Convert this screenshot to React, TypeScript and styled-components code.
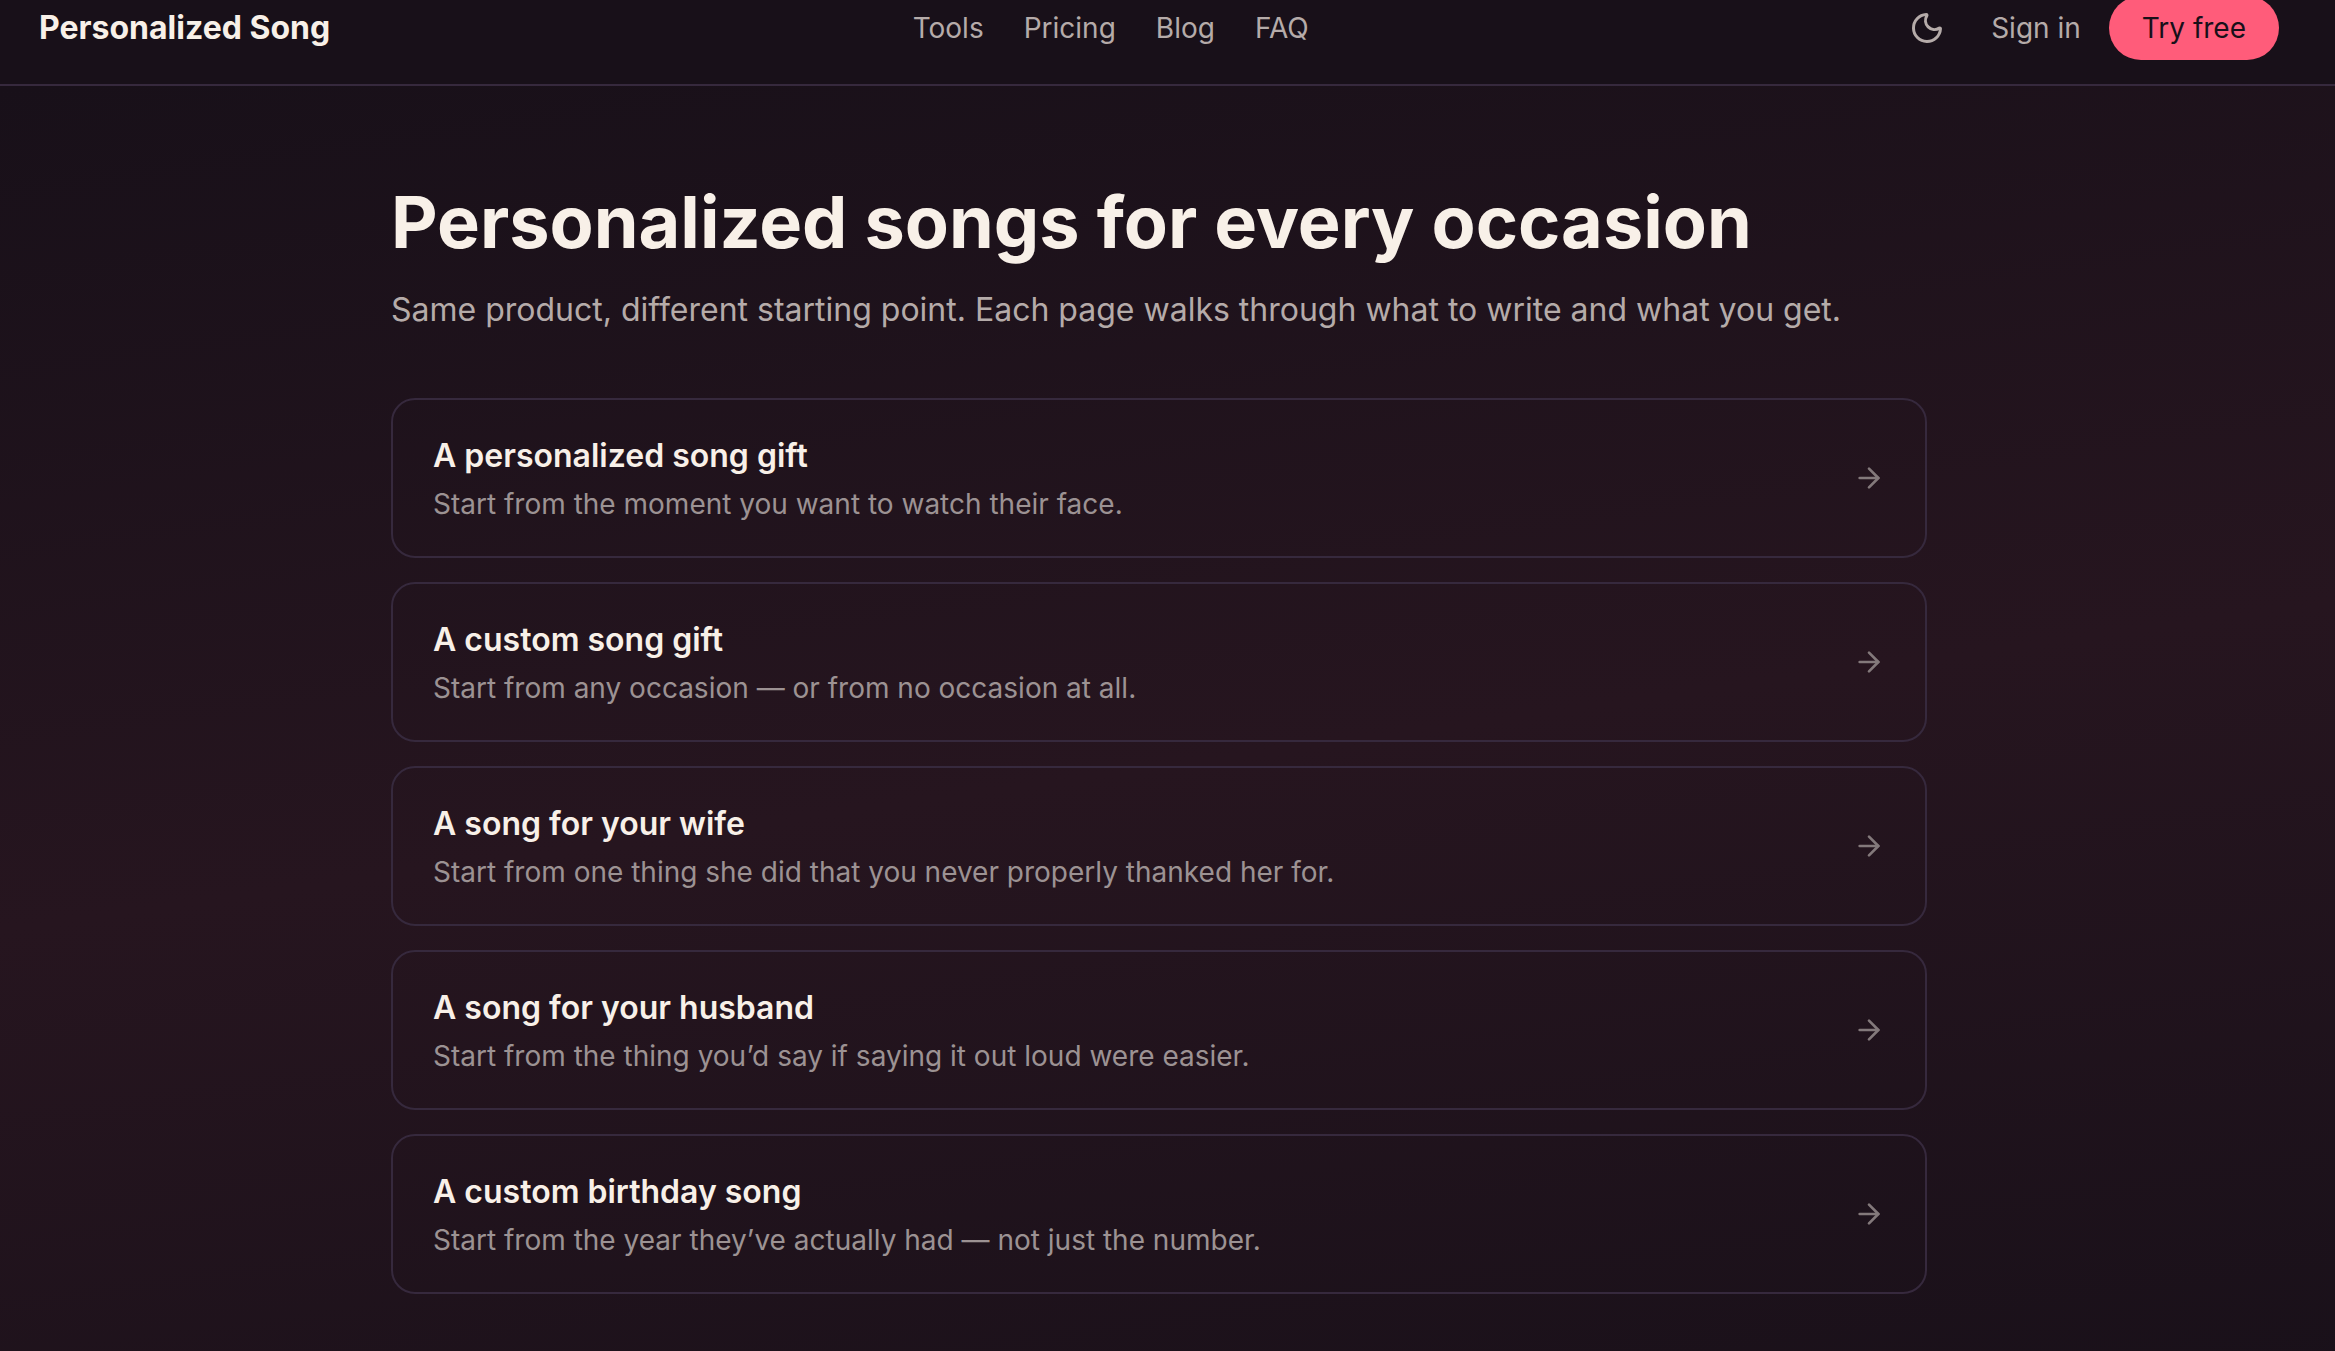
import React from "react";
import styled, { createGlobalStyle } from "styled-components";
import { ArrowRight, Moon } from "lucide-react";

const GlobalStyle = createGlobalStyle`
  *, *::before, *::after { box-sizing: border-box; }
  html { background: #181019; }
  body {
    margin: 0;
    font-family: Inter, "Liberation Sans", sans-serif;
    color: #f8f0e8;
    -webkit-font-smoothing: antialiased;
  }
`;

const Page = styled.div`
  display: flex;
  flex-direction: column;
  min-height: 100vh;
`;

const Header = styled.header`
  display: flex;
  align-items: center;
  justify-content: space-between;
  height: 86px;
  padding: 0 56px 28px 39px;
  border-bottom: 2px solid #36293d;
  background: #181019;
`;

const Brand = styled.a`
  color: inherit;
  font-size: 32px;
  font-weight: 700;
  line-height: 40px;
  text-decoration: none;
`;

const Nav = styled.nav`
  display: flex;
  gap: 40px;
`;

const HeaderLink = styled.a`
  color: #b5aba9;
  font-size: 28px;
  line-height: 40px;
  text-decoration: none;
`;

const Actions = styled.div`
  display: flex;
  align-items: center;
  gap: 28px;
  height: 56px;
`;

const ThemeButton = styled.button`
  display: flex;
  align-items: center;
  justify-content: center;
  width: 72px;
  height: 64px;
  padding: 0;
  border: 0;
  border-radius: 32px;
  background: transparent;
  color: #b5aba9;
`;

const TryButton = styled.button`
  height: 64px;
  padding: 0 33px;
  border: 0;
  border-radius: 32px;
  background: #ff5c7a;
  color: #181019;
  font: inherit;
  font-size: 28px;
  line-height: 40px;
`;

const Main = styled.main`
  flex: 1;
  padding: 96px 17px 56px 0;
  background: linear-gradient(172deg, #181019 0%, #26151f 53%, #181019 106%);
`;

const Content = styled.div`
  max-width: 1536px;
  margin: 0 auto;
`;

const Title = styled.h1`
  margin: 0;
  font-size: 72px;
  font-weight: 700;
  line-height: 80px;
`;

const Lead = styled.p`
  margin: 24px 0 64px;
  color: #b5aba9;
  font-size: 32px;
  line-height: 48px;
`;

const List = styled.ul`
  display: grid;
  gap: 24px;
  margin: 0;
  padding: 0;
  list-style: none;
`;

const Card = styled.a`
  display: flex;
  align-items: center;
  justify-content: space-between;
  gap: 32px;
  min-height: 160px;
  padding: 0 40px;
  border: 2px solid #36293d;
  border-radius: 24px;
  color: #83797b;
  text-decoration: none;
`;

const CardTitle = styled.h2`
  margin: 0;
  color: #f8f0e8;
  font-size: 32px;
  font-weight: 600;
  line-height: 48px;
`;

const CardText = styled.p`
  margin: 4px 0 0;
  color: #9c9293;
  font-size: 28px;
  line-height: 40px;
`;

const navLinks = ["Tools", "Pricing", "Blog", "FAQ"];

const occasions = [
  { title: "A personalized song gift", text: "Start from the moment you want to watch their face." },
  { title: "A custom song gift", text: "Start from any occasion — or from no occasion at all." },
  { title: "A song for your wife", text: "Start from one thing she did that you never properly thanked her for." },
  { title: "A song for your husband", text: "Start from the thing you’d say if saying it out loud were easier." },
  { title: "A custom birthday song", text: "Start from the year they’ve actually had — not just the number." },
];

export default function App() {
  return (
    <Page>
      <GlobalStyle />
      <Header>
        <Brand href="#">Personalized Song</Brand>
        <Nav>
          {navLinks.map((label) => (
            <HeaderLink key={label} href="#">{label}</HeaderLink>
          ))}
        </Nav>
        <Actions>
          <ThemeButton type="button" aria-label="Toggle theme">
            <Moon size={36} />
          </ThemeButton>
          <HeaderLink href="#">Sign in</HeaderLink>
          <TryButton type="button">Try free</TryButton>
        </Actions>
      </Header>
      <Main>
        <Content>
          <Title>Personalized songs for every occasion</Title>
          <Lead>Same product, different starting point. Each page walks through what to write and what you get.</Lead>
          <List>
            {occasions.map((item) => (
              <li key={item.title}>
                <Card href="#">
                  <div>
                    <CardTitle>{item.title}</CardTitle>
                    <CardText>{item.text}</CardText>
                  </div>
                  <ArrowRight size={32} />
                </Card>
              </li>
            ))}
          </List>
        </Content>
      </Main>
    </Page>
  );
}
